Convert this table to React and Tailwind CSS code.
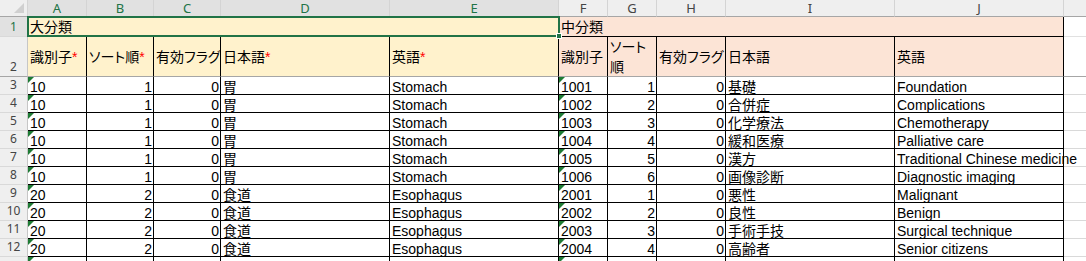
import React from "react";

const colHeads = [
  { label: "A", sel: true },
  { label: "B", sel: true },
  { label: "C", sel: true },
  { label: "D", sel: true },
  { label: "E", sel: true },
  { label: "F", sel: false },
  { label: "G", sel: false },
  { label: "H", sel: false },
  { label: "I", sel: false },
  { label: "J", sel: false },
  { label: "", sel: false },
];

const rows = [
  ["10", "1", "0", "胃", "Stomach", "1001", "1", "0", "基礎", "Foundation"],
  ["10", "1", "0", "胃", "Stomach", "1002", "2", "0", "合併症", "Complications"],
  ["10", "1", "0", "胃", "Stomach", "1003", "3", "0", "化学療法", "Chemotherapy"],
  ["10", "1", "0", "胃", "Stomach", "1004", "4", "0", "緩和医療", "Palliative care"],
  ["10", "1", "0", "胃", "Stomach", "1005", "5", "0", "漢方", "Traditional Chinese medicine"],
  ["10", "1", "0", "胃", "Stomach", "1006", "6", "0", "画像診断", "Diagnostic imaging"],
  ["20", "2", "0", "食道", "Esophagus", "2001", "1", "0", "悪性", "Malignant"],
  ["20", "2", "0", "食道", "Esophagus", "2002", "2", "0", "良性", "Benign"],
  ["20", "2", "0", "食道", "Esophagus", "2003", "3", "0", "手術手技", "Surgical technique"],
  ["20", "2", "0", "食道", "Esophagus", "2004", "4", "0", "高齢者", "Senior citizens"],
];

const yellowHeads = [
  { text: "識別子", req: true },
  { text: "ソート順", req: true },
  { text: "有効フラグ", req: false },
  { text: "日本語", req: true },
  { text: "英語", req: true },
];

const orangeHeads = ["識別子", null, "有効フラグ", "日本語", "英語"];

function RowHead({ n, sel, tall }) {
  return (
    <div
      className={`flex h-full items-end justify-center border-r border-b border-r-[#c6c6c6] pb-[1px] font-['Noto_Sans',sans-serif] text-[12px] leading-[16px] ${
        tall ? "border-b-[#a6a6a6]" : "border-b-[#d9d9d9]"
      } ${sel ? "bg-[#e1e1e1] text-[#217346]" : "bg-[#efefef] text-[#444]"}`}
    >
      {n}
    </div>
  );
}

function DataCell({ value, col }) {
  const right = col === 1 || col === 2 || col === 6 || col === 7;
  const flag = col === 0 || col === 5;
  return (
    <div
      className={`relative h-[18px] border-r border-b border-black pt-[2px] text-[14px] leading-[16px] whitespace-nowrap ${
        right ? "text-right pr-[1px]" : "pl-[2px]"
      } ${col === 9 ? "z-10 overflow-visible" : "overflow-hidden"}`}
    >
      {flag && (
        <span className="absolute left-0 top-0 h-0 w-0 border-t-[6px] border-r-[6px] border-t-[#1e7b34] border-r-transparent" />
      )}
      {value}
    </div>
  );
}

export default function App() {
  return (
    <div className="h-[261px] w-[1086px] overflow-hidden bg-white text-black font-['Liberation_Sans','Noto_Sans_CJK_JP',sans-serif] [font-feature-settings:'palt']">
      <div className="grid grid-cols-[28px_59px_67px_67px_169px_169px_49px_49px_69px_169px_169px_1fr]">
        {/* column headers */}
        <div className="relative h-[17px] bg-[#efefef] border-r border-b border-r-[#d4d4d4] border-b-[#a6a6a6]">
          <svg className="absolute right-[3px] bottom-[3px]" width="10" height="10" viewBox="0 0 10 10">
            <polygon points="10,0 10,10 0,10" fill="#d0d0d0" />
          </svg>
        </div>
        {colHeads.map((c, i) => (
          <div
            key={i}
            className={`flex h-[17px] items-center justify-center border-b border-b-[#a6a6a6] font-['Noto_Sans',sans-serif] text-[13px] leading-[16px] ${
              i < 10 ? "border-r border-r-[#d4d4d4]" : ""
            } ${c.sel ? "bg-[#e1e1e1] text-[#217346]" : "bg-[#efefef] text-[#444]"}`}
          >
            {c.label}
          </div>
        ))}

        {/* row 1 */}
        <div className="h-[20px]">
          <RowHead n="1" sel />
        </div>
        <div className="relative col-span-5 flex h-[20px] items-center border-b border-black bg-[#fff2cc] pl-[2px] pt-[1px] text-[14px] leading-[17px]">
          大分類
          <div className="absolute -left-px -top-px -right-px -bottom-px z-20 border-2 border-[#217346]">
            <div className="absolute right-[-4px] bottom-[-4px] h-[6px] w-[6px] border border-white bg-[#217346]" />
          </div>
        </div>
        <div className="col-span-5 flex h-[20px] items-center border-r border-b border-black bg-[#fce4d6] pl-[2px] pt-[1px] text-[14px] leading-[17px]">
          中分類
        </div>
        <div className="h-[20px] border-b border-b-[#e1e1e1]" />

        {/* row 2 */}
        <div className="h-[40px]">
          <RowHead n="2" tall />
        </div>
        {yellowHeads.map((h, i) => (
          <div
            key={i}
            className="flex h-[40px] items-center overflow-hidden whitespace-nowrap border-r border-b border-r-black border-b-[#a6a6a6] bg-[#fff2cc] pl-[2px] pt-[1px] text-[14px] leading-[17px]"
          >
            {h.text}
            {h.req && <span className="text-[#ff0000]">*</span>}
          </div>
        ))}
        {orangeHeads.map((h, i) =>
          h === null ? (
            <div
              key={i}
              className="h-[40px] border-r border-b border-r-black border-b-[#a6a6a6] bg-[#fce4d6] pl-[2px] text-[14px] leading-[20px]"
            >
              ソート
              <br />順
            </div>
          ) : (
            <div
              key={i}
              className="flex h-[40px] items-center overflow-hidden whitespace-nowrap border-r border-b border-r-black border-b-[#a6a6a6] bg-[#fce4d6] pl-[2px] pt-[1px] text-[14px] leading-[17px]"
            >
              {h}
            </div>
          )
        )}
        <div className="h-[40px] border-b border-b-[#a6a6a6]" />

        {/* data rows */}
        {rows.map((r, ri) => (
          <React.Fragment key={ri}>
            <div className="h-[18px]">
              <RowHead n={String(ri + 3)} />
            </div>
            {r.map((v, ci) => (
              <DataCell key={ci} value={v} col={ci} />
            ))}
            <div className="h-[18px] border-b border-b-[#d9d9d9]" />
          </React.Fragment>
        ))}

        {/* row 13, only its top edge is in view */}
        <div className="h-[18px]">
          <RowHead n="" />
        </div>
        {Array.from({ length: 10 }).map((_, ci) => (
          <DataCell key={ci} value="" col={ci} />
        ))}
        <div className="h-[18px] border-b border-b-[#d9d9d9]" />
      </div>
    </div>
  );
}
